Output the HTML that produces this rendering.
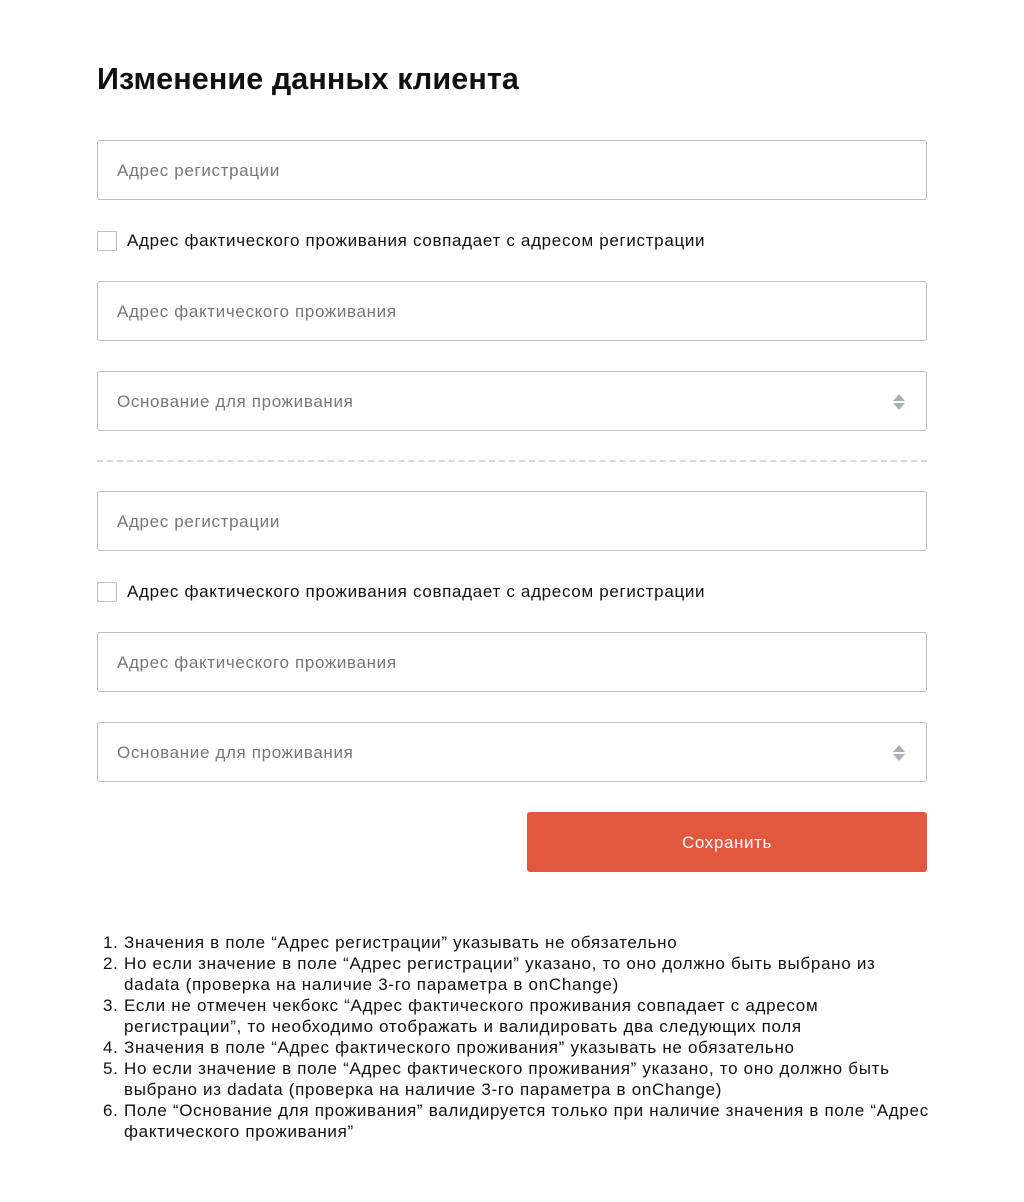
<!DOCTYPE html>
<html><head><meta charset="utf-8"><style>
*{box-sizing:border-box;margin:0;padding:0}
body{width:1024px;height:1202px;background:#fff;font-family:"Liberation Sans",sans-serif;color:#111;position:relative}
h1{position:absolute;left:97px;top:62px;font-size:30.5px;font-weight:bold;letter-spacing:0.1px}
.f{position:absolute;left:97px;width:830px;height:60px;border:1px solid #b9c0c8;border-radius:3px;font-size:17px;color:#777;padding-left:19px;line-height:60px;letter-spacing:0.65px}
.cb{position:absolute;left:97px;width:20px;height:20px;border:1px solid #b9c0c8;border-radius:1px}
.cl{position:absolute;left:127px;font-size:17px;color:#111;letter-spacing:0.68px;white-space:nowrap}
.arr{position:absolute;right:20px;top:21px}
.dash{position:absolute;left:97px;top:460px;width:830px;border-top:2px dashed #d5d9de}
.btn{position:absolute;left:527px;top:812px;width:400px;height:60px;background:#e1583f;border-radius:3px;color:#fff;font-size:17px;text-align:center;line-height:62px;letter-spacing:0.6px}
ol{position:absolute;left:124px;top:932px;width:880px;font-size:17px;line-height:21px;color:#111;letter-spacing:0.7px;white-space:nowrap}
</style></head><body>
<h1>Изменение данных клиента</h1>
<div class="f" style="top:140px">Адрес регистрации</div>
<div class="cb" style="top:231px"></div><div class="cl" style="top:231px">Адрес фактического проживания совпадает с адресом регистрации</div>
<div class="f" style="top:281px">Адрес фактического проживания</div>
<div class="f" style="top:371px">Основание для проживания<svg class="arr" width="14" height="18" viewBox="0 0 14 18"><path d="M1 8L7 1L13 8Z M1 10L7 17L13 10Z" fill="#a7afb8"/></svg></div>
<div class="dash"></div>
<div class="f" style="top:491px">Адрес регистрации</div>
<div class="cb" style="top:582px"></div><div class="cl" style="top:582px">Адрес фактического проживания совпадает с адресом регистрации</div>
<div class="f" style="top:632px">Адрес фактического проживания</div>
<div class="f" style="top:722px">Основание для проживания<svg class="arr" width="14" height="18" viewBox="0 0 14 18"><path d="M1 8L7 1L13 8Z M1 10L7 17L13 10Z" fill="#a7afb8"/></svg></div>
<div class="btn">Сохранить</div>
<ol>
<li>Значения в поле “Адрес регистрации” указывать не обязательно</li>
<li>Но если значение в поле “Адрес регистрации” указано, то оно должно быть выбрано из<br>dadata (проверка на наличие 3-го параметра в onChange)</li>
<li>Если не отмечен чекбокс “Адрес фактического проживания совпадает с адресом<br>регистрации”, то необходимо отображать и валидировать два следующих поля</li>
<li>Значения в поле “Адрес фактического проживания” указывать не обязательно</li>
<li>Но если значение в поле “Адрес фактического проживания” указано, то оно должно быть<br>выбрано из dadata (проверка на наличие 3-го параметра в onChange)</li>
<li>Поле “Основание для проживания” валидируется только при наличие значения в поле “Адрес<br>фактического проживания”</li>
</ol>
</body></html>
